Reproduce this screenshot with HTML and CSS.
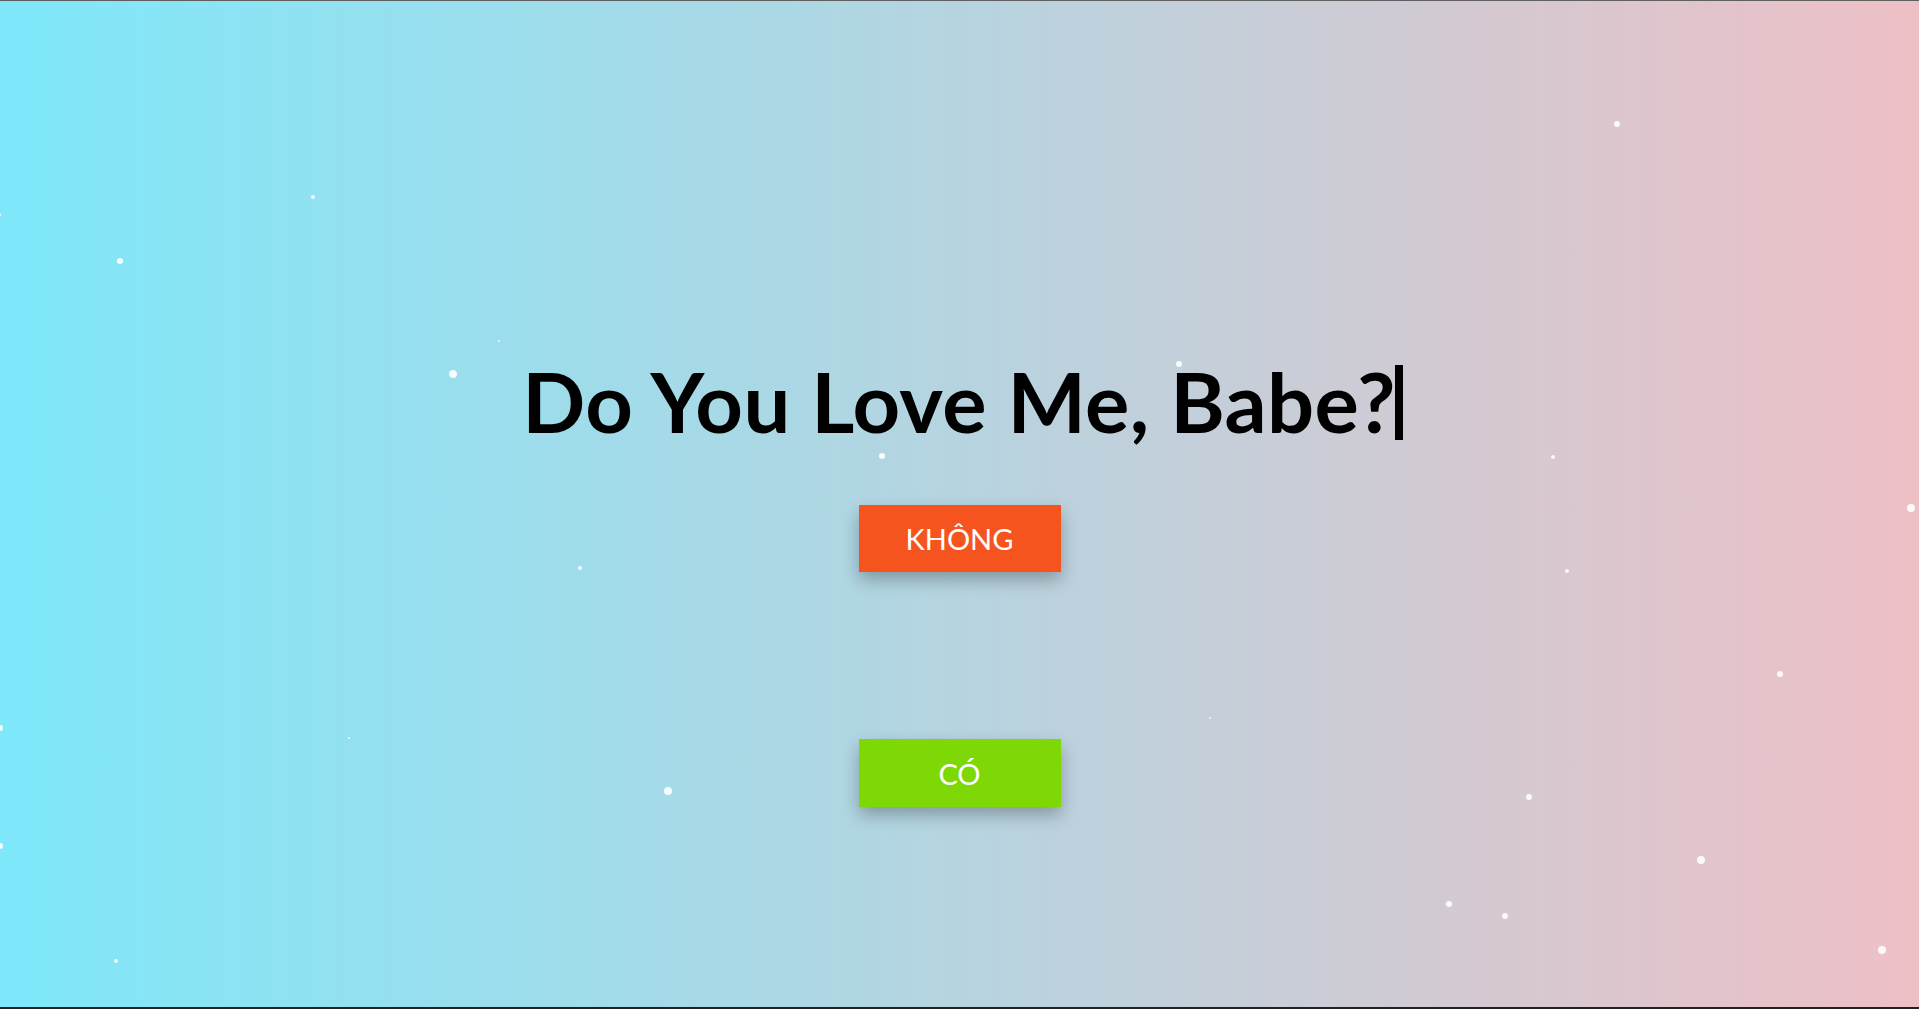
FILE: index.html
```html
<!DOCTYPE html>
<html lang="vi">
<head>
<meta charset="utf-8">
<title>Do You Love Me, Babe?</title>
<link rel="stylesheet" href="styles.css">
</head>
<body>
<div class="page">
  <div class="stars">
    <span class="star s3" style="left:1617px;top:123px"></span>
    <span class="star s2" style="left:313px;top:196px"></span>
    <span class="star s2" style="left:-1px;top:214px"></span>
    <span class="star s3" style="left:120px;top:260px"></span>
    <span class="star s1" style="left:499px;top:340px"></span>
    <span class="star s4" style="left:453px;top:373px"></span>
    <span class="star s3" style="left:1179px;top:363px"></span>
    <span class="star s3" style="left:882px;top:455px"></span>
    <span class="star s2" style="left:1553px;top:456px"></span>
    <span class="star s4" style="left:1911px;top:507px"></span>
    <span class="star s2" style="left:580px;top:567px"></span>
    <span class="star s2" style="left:1567px;top:570px"></span>
    <span class="star s3" style="left:1780px;top:673px"></span>
    <span class="star s3" style="left:0px;top:727px"></span>
    <span class="star s1" style="left:349px;top:737px"></span>
    <span class="star s1" style="left:1210px;top:717px"></span>
    <span class="star s4" style="left:668px;top:790px"></span>
    <span class="star s3" style="left:1529px;top:796px"></span>
    <span class="star s4" style="left:1701px;top:859px"></span>
    <span class="star s3" style="left:0px;top:845px"></span>
    <span class="star s3" style="left:1449px;top:903px"></span>
    <span class="star s3" style="left:1505px;top:915px"></span>
    <span class="star s4" style="left:1882px;top:949px"></span>
    <span class="star s2" style="left:116px;top:960px"></span>
  </div>
  <main class="content">
    <h1 class="title"><span class="typed">Do You Love Me, Babe?</span><span class="cursor"></span></h1>
    <button class="btn btn-no">KHÔNG</button>
    <button class="btn btn-yes">CÓ</button>
  </main>
</div>
</body>
</html>
```
FILE: styles.css
```css
html, body {
  margin: 0;
  padding: 0;
  height: 100%;
  overflow: hidden;
}
body {
  background: #202124;
  font-family: "Lato", "Open Sans", sans-serif;
}
.page {
  position: relative;
  box-sizing: border-box;
  height: 1007px;
  border-top: 1px solid #5f5f5f;
  background: linear-gradient(to right, #7ee8fa 0%, #eec0c6 100%);
  overflow: hidden;
}
.stars {
  position: absolute;
  inset: 0;
  pointer-events: none;
}
.star {
  position: absolute;
  border-radius: 50%;
  background: #ffffff;
  opacity: 0.9;
  transform: translate(-50%, -50%);
}
.s1 { width: 2px; height: 2px; }
.s2 { width: 4px; height: 4px; }
.s3 { width: 6px; height: 6px; }
.s4 { width: 8px; height: 8px; }
.content {
  position: relative;
  display: flex;
  flex-direction: column;
  align-items: center;
  padding-top: 359px;
}
.title {
  margin: 0;
  font-size: 83px;
  line-height: 1;
  font-weight: 700;
  color: #000;
  display: flex;
  align-items: center;
  padding-left: 6px;
}
.typed {
  letter-spacing: 0.4px;
}
.cursor {
  display: inline-block;
  width: 8px;
  height: 75px;
  background: #000;
  margin-left: -1px;
  margin-top: 2px;
}
.btn {
  width: 202px;
  height: 67px;
  border: none;
  color: #fff;
  font-family: "Lato", "Open Sans", sans-serif;
  font-size: 29px;
  font-weight: 400;
  cursor: pointer;
  box-shadow: 0 8px 16px rgba(0, 0, 0, 0.28);
  padding: 0;
}
.btn-no {
  margin-top: 62px;
  background: #f6541f;
}
.btn-yes {
  margin-top: 167px;
  height: 68px;
  background: #7ed806;
}
```
